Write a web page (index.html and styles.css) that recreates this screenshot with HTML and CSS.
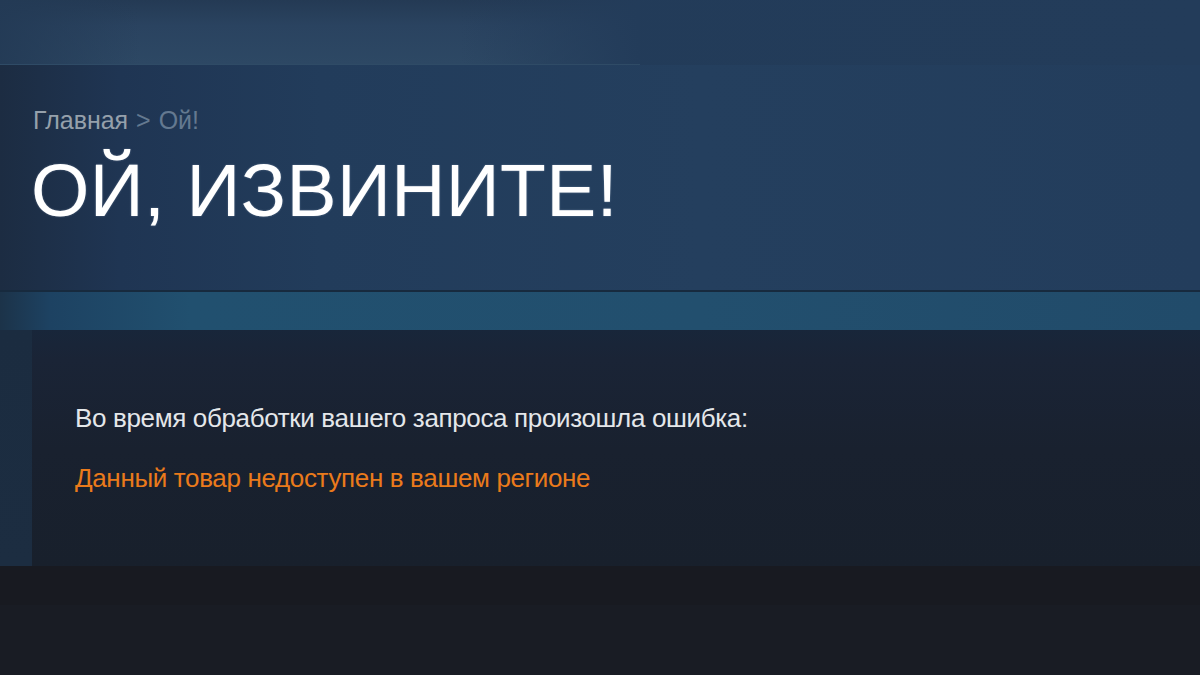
FILE: index.html
```html
<!DOCTYPE html>
<html lang="ru">
<head>
<meta charset="utf-8">
<title>Ой, извините!</title>
<link rel="stylesheet" href="styles.css">
</head>
<body>
<div class="page">
  <div class="topbar">
    <div class="topbar-left"></div>
    <div class="topbar-right"></div>
  </div>
  <header class="header">
    <div class="breadcrumb"><a class="crumb-link">Главная</a> <span class="crumb-sep">&gt;</span> <span class="crumb-current">Ой!</span></div>
    <h1 class="title">ОЙ, ИЗВИНИТЕ!</h1>
  </header>
  <div class="band"></div>
  <main class="main">
    <div class="side"></div>
    <section class="panel">
      <p class="msg">Во время обработки вашего запроса произошла ошибка:</p>
      <p class="error">Данный товар недоступен в вашем регионе</p>
    </section>
  </main>
  <footer class="footer">
    <div class="footer-top"></div>
    <div class="footer-bottom"></div>
  </footer>
</div>
</body>
</html>
```

FILE: styles.css
```css
html, body {
  margin: 0;
  padding: 0;
  height: 100%;
  overflow: hidden;
  background: #181b22;
  font-family: "Liberation Sans", Arial, sans-serif;
}

.page {
  width: 1200px;
  height: 675px;
  display: flex;
  flex-direction: column;
}

.topbar {
  height: 65px;
  flex: none;
  display: flex;
  background: linear-gradient(to right, #223b58 0, #233c5a 100%);
}

.topbar-left {
  width: 640px;
  flex: none;
  box-sizing: border-box;
  border-bottom: 1px solid #2f4b66;
  background:
    linear-gradient(to right, rgba(35,58,85,0.9) 0, rgba(35,58,85,0) 140px, rgba(35,60,90,0) 460px, rgba(35,60,90,1) 640px),
    linear-gradient(to bottom, #243a54 0, #2a4360 40%, #2d4864 100%);
}

.topbar-right {
  flex: 1;
}

.header {
  height: 227px;
  flex: none;
  box-sizing: border-box;
  padding: 41px 0 0 33px;
  background: linear-gradient(to right, #1c2c42 0, #1f3553 120px, #223c5b 320px, #243f5e 700px, #233d5c 1200px);
  border-bottom: 2px solid #172a3e;
}

.breadcrumb {
  font-size: 25px;
  line-height: 28px;
  color: #6f8196;
  letter-spacing: 0;
  word-spacing: 1px;
}

.crumb-link {
  color: #95a0ab;
}

.crumb-sep, .crumb-current {
  color: #647990;
}

.title {
  margin: 13px 0 0 -2px;
  font-weight: normal;
  font-size: 75px;
  line-height: 86px;
  color: #ffffff;
  letter-spacing: 0.4px;
  text-shadow: 0 0 2px rgba(220,235,255,0.35);
}

.band {
  height: 38px;
  flex: none;
  background: linear-gradient(to right, #1c3349 0, #1d4262 50px, #21506f 190px, #224f6e 700px, #214b6a 1200px);
}

.main {
  height: 236px;
  flex: none;
  display: flex;
}

.side {
  width: 32px;
  flex: none;
  background: linear-gradient(to bottom, #1b2c40 0, #1c2d41 100%);
}

.panel {
  flex: 1;
  box-sizing: border-box;
  padding: 73px 0 0 43px;
  background: linear-gradient(to bottom, #18263a 0, #1a2436 30px, #19212f 120px, #18202c 100%);
}

.msg {
  margin: 0;
  font-size: 26px;
  line-height: 30px;
  color: #e4e7ea;
  letter-spacing: -0.35px;
}

.error {
  margin: 30px 0 0 0;
  font-size: 26px;
  line-height: 30px;
  color: #ea7a1b;
  letter-spacing: -0.35px;
}

.footer {
  flex: 1;
  display: flex;
  flex-direction: column;
}

.footer-top {
  height: 39px;
  flex: none;
  background: #181a21;
}

.footer-bottom {
  flex: 1;
  background: #191c24;
}
```
